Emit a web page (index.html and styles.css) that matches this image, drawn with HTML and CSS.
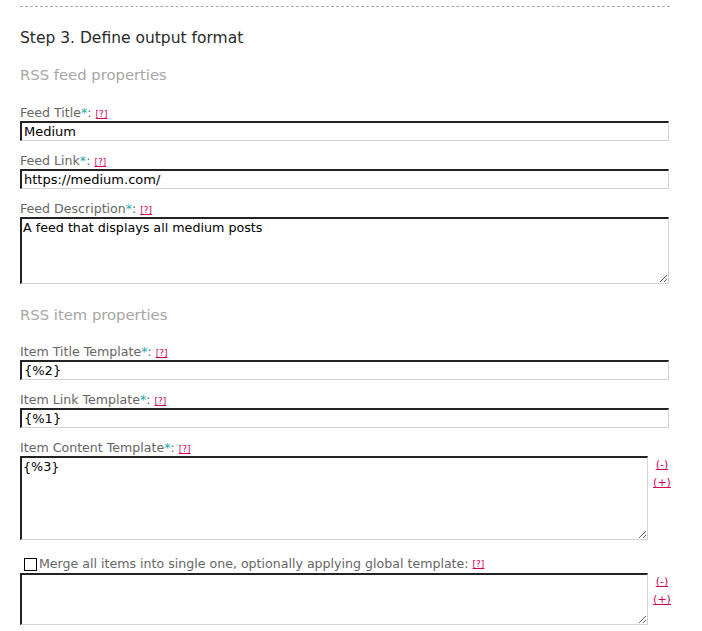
FILE: index.html
```html
<!DOCTYPE html>
<html>
<head>
<meta charset="utf-8">
<link rel="stylesheet" href="styles.css">
</head>
<body>
<div class="page">
  <div class="rule"></div>
  <h2 class="step">Step 3. Define output format</h2>

  <h3 class="section">RSS feed properties</h3>

  <div class="field">
    <label class="label">Feed Title<span class="req">*</span>: <a class="help" href="#">[?]</a></label>
    <input class="text" type="text" value="Medium">
  </div>
  <div class="field">
    <label class="label">Feed Link<span class="req">*</span>: <a class="help" href="#">[?]</a></label>
    <input class="text" type="text" value="https://medium.com/">
  </div>
  <div class="field">
    <label class="label">Feed Description<span class="req">*</span>: <a class="help" href="#">[?]</a></label>
    <textarea class="area area-desc">A feed that displays all medium posts</textarea>
  </div>

  <h3 class="section section-item">RSS item properties</h3>

  <div class="field">
    <label class="label">Item Title Template<span class="req">*</span>: <a class="help" href="#">[?]</a></label>
    <input class="text" type="text" value="{%2}">
  </div>
  <div class="field">
    <label class="label">Item Link Template<span class="req">*</span>: <a class="help" href="#">[?]</a></label>
    <input class="text" type="text" value="{%1}">
  </div>
  <div class="field">
    <label class="label">Item Content Template<span class="req">*</span>: <a class="help" href="#">[?]</a></label>
    <div class="area-row">
      <textarea class="area area-content">{%3}</textarea>
      <div class="sizers">
        <a class="sizer" href="#">(-)</a>
        <a class="sizer" href="#">(+)</a>
      </div>
    </div>
  </div>
  <div class="field field-merge">
    <label class="label check-label"><input class="check" type="checkbox">Merge all items into single one, optionally applying global template: <a class="help" href="#">[?]</a></label>
    <div class="area-row">
      <textarea class="area area-global"></textarea>
      <div class="sizers sizers-global">
        <a class="sizer" href="#">(-)</a>
        <a class="sizer" href="#">(+)</a>
      </div>
    </div>
  </div>
</div>
</body>
</html>
```

FILE: styles.css
```css
html, body {
  margin: 0;
  padding: 0;
  background: #fff;
}

body {
  font-family: "DejaVu Sans", Verdana, sans-serif;
}

.page {
  width: 680px;
  padding-left: 20px;
}

.rule {
  width: 650px;
  height: 0;
  margin-top: 6px;
  border-top: 1px dashed #aaa;
}

.step {
  margin: 20px 0 0 0;
  font-size: 15.5px;
  font-weight: normal;
  line-height: 22px;
  color: #2a2a2a;
}

.section {
  margin: 16px 0 19px 0;
  font-size: 14.8px;
  font-weight: normal;
  line-height: 20px;
  color: #a6a6a6;
}

.section-item {
  margin-top: 21px;
  margin-bottom: 18px;
}

.field {
  display: flex;
  flex-direction: column;
  align-items: flex-start;
  margin-bottom: 11px;
}

.label {
  display: block;
  height: 17px;
  font-size: 12.6px;
  line-height: 17px;
  color: #666;
}

.req {
  color: #2aa8a0;
}

.help {
  font-size: 9px;
  color: #d0005a;
  text-decoration: underline;
}

.text {
  box-sizing: border-box;
  width: 649px;
  height: 20px;
  margin: 0;
  padding: 0 2px;
  font-family: "DejaVu Sans", Verdana, sans-serif;
  font-size: 13px;
  color: #000;
  background: #fff;
  border-style: solid;
  border-width: 2px 1px 1px 2px;
  border-color: #222 #d4d4d4 #d4d4d4 #222;
  outline: none;
}

.area {
  box-sizing: border-box;
  flex-shrink: 0;
  margin: 0;
  padding: 1px 1px;
  font-family: "DejaVu Sans", Verdana, sans-serif;
  font-size: 12.7px;
  line-height: 16px;
  color: #000;
  background: #fff;
  border-style: solid;
  border-width: 2px 1px 1px 2px;
  border-color: #222 #d4d4d4 #d4d4d4 #222;
  outline: none;
  resize: both;
  display: block;
}

.area-desc {
  width: 649px;
  height: 67px;
}

.area-row {
  display: flex;
  align-items: flex-start;
}

.area-content {
  width: 628px;
  height: 84px;
}

.area-global {
  width: 628px;
  height: 52px;
}

.sizers {
  flex-shrink: 0;
  display: flex;
  flex-direction: column;
  align-items: center;
  width: 28px;
  padding-top: 1px;
  gap: 3px;
}

.sizer {
  font-size: 11px;
  line-height: 15px;
  color: #d0005a;
  text-decoration: underline;
}

.field-merge {
  margin-top: 15px;
}

.check-label {
  display: flex;
  align-items: center;
  height: 18px;
  line-height: 18px;
}

.check-label .help {
  margin-left: 4px;
}

.check {
  -webkit-appearance: none;
  appearance: none;
  box-sizing: border-box;
  width: 13px;
  height: 13px;
  margin: 0 2px 0 4px;
  border: 1px solid #000;
  background: #fff;
}
```
